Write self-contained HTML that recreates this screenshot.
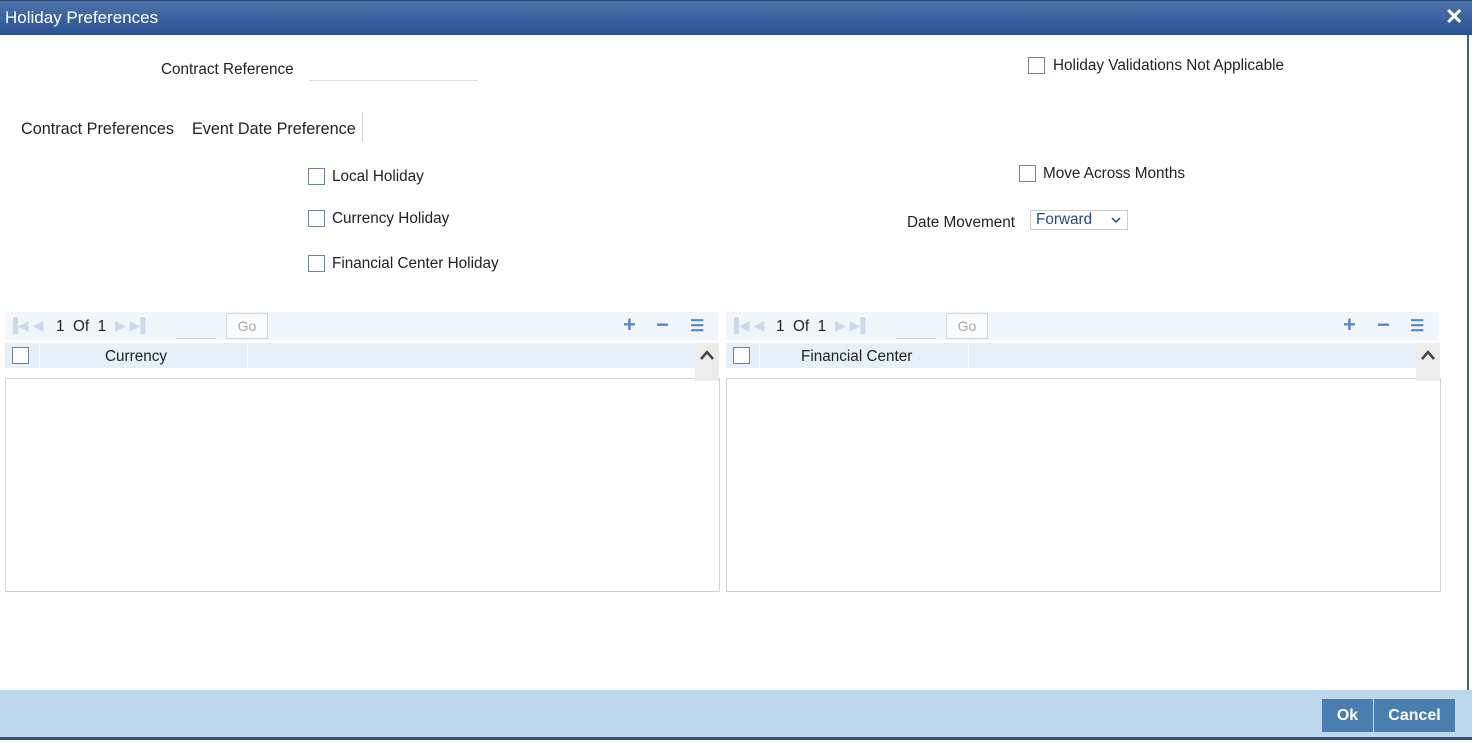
<!DOCTYPE html>
<html><head><style>
*{margin:0;padding:0;box-sizing:border-box}
body{width:1472px;height:743px;position:relative;background:#fff;font-family:"Liberation Sans",sans-serif;font-size:15.3px;color:#222;overflow:hidden}
.a{position:absolute;white-space:nowrap}
.cb{position:absolute;width:17px;height:17px;border:1px solid #6f8296;background:#fff}
.title{left:0;top:0;width:1472px;height:35px;background:linear-gradient(#4c74ab,#2b5192);border-top:1px solid #2a4a7a}
.foot{left:0;top:690px;width:1472px;height:50px;background:#bdd8ec;border-bottom:3px solid #2f4f7f}
.btn{position:absolute;top:699px;height:33px;background:#4a7eaf;color:#fff;font-weight:bold;font-size:16px;text-align:center;line-height:33px}
.tb{position:absolute;height:28px;background:#f1f6fc}
.hd{position:absolute;height:25px;background:#e6f0fb}
.body{position:absolute;border:1px solid #cfd4da;background:#fff}
.ic{color:#cbd9ea;font-size:14px}
.go{position:absolute;width:42px;height:26px;border:1px solid #d0d5da;color:#aaa;text-align:center;line-height:24px;font-size:14px;background:#f8fafc}
.blue{color:#5a86c9;font-size:22px;font-weight:bold}
.scr{position:absolute;width:24px;height:38px;background:#ececec}
</style></head><body>
<div class="a title"></div>
<div class="a" style="left:5px;top:8px;color:#fff;font-size:17px">Holiday Preferences</div>
<div class="a" style="left:1445px;top:4px;color:#fff;font-size:22px;font-weight:bold">✕</div>
<div class="a" style="left:1467px;top:35px;width:2px;height:655px;background:#4a5e7a"></div>

<div class="a" style="left:161px;top:61px">Contract Reference</div>
<div class="a" style="left:309px;top:80px;width:169px;height:1px;background:#dcdcdc"></div>
<div class="cb" style="left:1028px;top:57px"></div>
<div class="a" style="left:1053px;top:57px">Holiday Validations Not Applicable</div>

<div class="a" style="left:21px;top:120px;font-size:16.2px">Contract Preferences</div>
<div class="a" style="left:192px;top:120px;font-size:16.2px">Event Date Preference</div>
<div class="a" style="left:362px;top:112px;width:1px;height:30px;background:#ccc"></div>

<div class="cb" style="left:308px;top:168px"></div><div class="a" style="left:332px;top:168px">Local Holiday</div>
<div class="cb" style="left:308px;top:210px"></div><div class="a" style="left:332px;top:210px">Currency Holiday</div>
<div class="cb" style="left:308px;top:255px"></div><div class="a" style="left:332px;top:255px">Financial Center Holiday</div>
<div class="cb" style="left:1019px;top:165px"></div><div class="a" style="left:1043px;top:165px">Move Across Months</div>
<div class="a" style="left:907px;top:214px">Date Movement</div>
<div class="a" style="left:1030px;top:210px;width:98px;height:20px;border:1px solid #ccc;color:#2a4a7a;padding-left:5px;line-height:18px">Forward
<svg style="position:absolute;left:80px;top:6px" width="10" height="7"><path d="M1 1L5 5L9 1" fill="none" stroke="#2a4a7a" stroke-width="1.5"/></svg></div>

<!-- grid 1 -->
<div class="tb" style="left:5px;top:312px;width:713px"></div>
<div class="a ic" style="left:8px;top:317px">▐◀ ◀</div>
<div class="a" style="left:56px;top:318px">1&nbsp; Of&nbsp; 1</div>
<div class="a ic" style="left:115px;top:317px">▶ ▶▌</div>
<div class="a" style="left:176px;top:338px;width:40px;height:1px;background:#ccc"></div>
<div class="go" style="left:226px;top:313px">Go</div>
<div class="a blue" style="left:623px;top:312px">+</div>
<div class="a blue" style="left:656px;top:312px">−</div>
<div class="a" style="left:690px;top:316px;color:#5a86c9;font-size:16px;font-weight:bold">☰</div>
<div class="hd" style="left:5px;top:343px;width:690px"></div>
<div class="cb" style="left:12px;top:347px"></div>
<div class="a" style="left:39px;top:343px;width:1px;height:25px;background:#fff"></div>
<div class="a" style="left:105px;top:348px">Currency</div>
<div class="a" style="left:247px;top:343px;width:1px;height:25px;background:#fff"></div>
<div class="body" style="left:5px;top:378px;width:715px;height:214px"></div>
<div class="scr" style="left:695px;top:343px"></div>
<svg class="a" style="left:699px;top:349px" width="16" height="12"><path d="M2 10L8 3L14 10" fill="none" stroke="#444" stroke-width="2.5"/></svg>

<!-- grid 2 -->
<div class="tb" style="left:726px;top:312px;width:713px"></div>
<div class="a ic" style="left:729px;top:317px">▐◀ ◀</div>
<div class="a" style="left:776px;top:318px">1&nbsp; Of&nbsp; 1</div>
<div class="a ic" style="left:835px;top:317px">▶ ▶▌</div>
<div class="a" style="left:896px;top:338px;width:40px;height:1px;background:#ccc"></div>
<div class="go" style="left:946px;top:313px">Go</div>
<div class="a blue" style="left:1343px;top:312px">+</div>
<div class="a blue" style="left:1377px;top:312px">−</div>
<div class="a" style="left:1410px;top:316px;color:#5a86c9;font-size:16px;font-weight:bold">☰</div>
<div class="hd" style="left:726px;top:343px;width:690px"></div>
<div class="cb" style="left:733px;top:347px"></div>
<div class="a" style="left:759px;top:343px;width:1px;height:25px;background:#fff"></div>
<div class="a" style="left:801px;top:348px">Financial Center</div>
<div class="a" style="left:968px;top:343px;width:1px;height:25px;background:#fff"></div>
<div class="body" style="left:726px;top:378px;width:715px;height:214px"></div>
<div class="scr" style="left:1416px;top:343px"></div>
<svg class="a" style="left:1420px;top:349px" width="16" height="12"><path d="M2 10L8 3L14 10" fill="none" stroke="#444" stroke-width="2.5"/></svg>

<div class="a foot"></div>
<div class="btn" style="left:1322px;width:51px">Ok</div>
<div class="btn" style="left:1374px;width:81px">Cancel</div>
</body></html>
